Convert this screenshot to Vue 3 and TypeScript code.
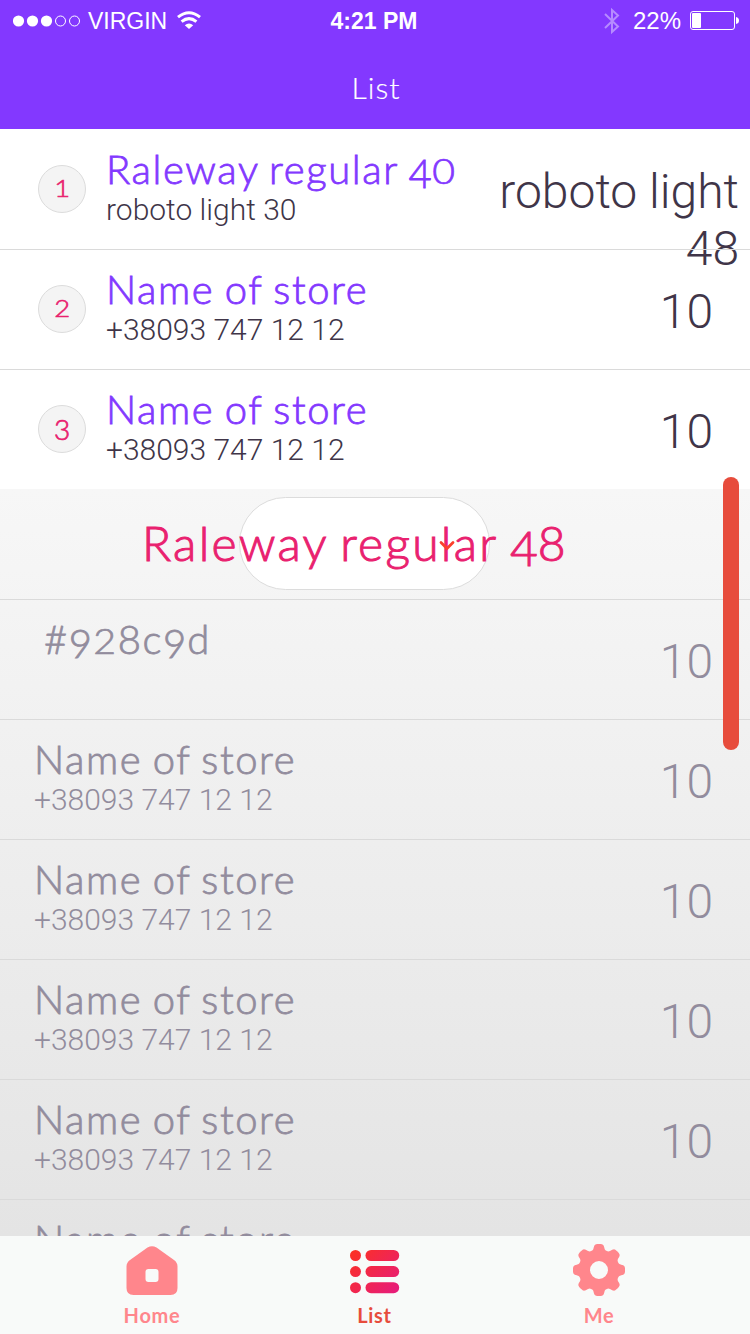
<script setup lang="ts">
interface Store {
  name: string
  detail: string
  value: string
  kind?: string
}

const ranked: Store[] = [
  { name: 'Raleway regular 40', detail: 'roboto light 30', value: 'roboto light 48', kind: 'wide' },
  { name: 'Name of store', detail: '+38093 747 12 12', value: '10' },
  { name: 'Name of store', detail: '+38093 747 12 12', value: '10' },
]

const others: Store[] = [
  { name: '#928c9d', detail: '', value: '10', kind: 'code' },
  ...Array.from({ length: 4 }, () => ({ name: 'Name of store', detail: '+38093 747 12 12', value: '10' })),
  { name: 'Name of store', detail: '', value: '' },
]

// Splits text so that digits can be set as old-style figures.
function figures(text: string) {
  return (text.match(/[012]|[34579]|[^0-9]+|[68]/g) ?? []).map((part) => ({
    part,
    cls: /^[012]$/.test(part) ? 'low' : /^[34579]$/.test(part) ? 'drop' : '',
  }))
}

// Eight-toothed outline around a 52x52 box.
const gear =
  Array.from({ length: 240 }, (_, i) => {
    const a = (i / 240) * Math.PI * 2
    const r = 23.2 + 2.9 * Math.tanh(2 * Math.cos(8 * a) + 0.5)
    return `${i ? 'L' : 'M'}${(26 + r * Math.cos(a)).toFixed(2)} ${(26 + r * Math.sin(a)).toFixed(2)}`
  }).join('') + 'ZM35 26A9 9 0 1 0 17 26A9 9 0 1 0 35 26Z'
</script>

<template>
  <div class="screen">
    <header>
      <div class="status">
        <div class="carrier">
          <svg width="68" height="12" viewBox="0 0 68 12">
            <circle v-for="i in 3" :key="i" :cx="14 * i - 8.5" cy="6" r="5.6" fill="#fff" />
            <circle v-for="i in 2" :key="i + 3" :cx="14 * i + 33.5" cy="6" r="5" fill="none" stroke="#fff" />
          </svg>
          <span class="virgin">VIRGIN</span>
          <svg class="wifi" width="24" height="19" viewBox="0 0 24 19" fill="none" stroke="#fff" stroke-width="3">
            <path d="M1 6.2Q12 -2.8 23 6.2" />
            <path d="M4.6 10.6Q12 4.6 19.4 10.6" />
            <path d="M12 18L7.8 14.2Q12 11 16.2 14.2Z" fill="#fff" stroke="none" />
          </svg>
        </div>
        <strong>4:21 PM</strong>
        <div class="power">
          <svg width="16" height="28" viewBox="0 0 16 28" fill="none" stroke="#b68bff" stroke-width="2">
            <path d="M1 7L14 19.5L8 25V3L14 8.5L1 21" />
          </svg>
          <span class="percent">22%</span>
          <svg width="49" height="20" viewBox="0 0 49 20">
            <rect x=".5" y=".5" width="44" height="18" rx="2.5" fill="none" stroke="#fff" />
            <rect x="2" y="2" width="9" height="15" rx="1" fill="#fff" />
            <path d="M46 6Q49 6.5 49 9.5Q49 12.500 46 13Z" fill="#fff" />
          </svg>
        </div>
      </div>
      <h1>List</h1>
    </header>

    <main>
      <section class="ranked">
        <article v-for="(s, i) in ranked" :key="i" class="row">
          <div class="badge"><span v-for="f in figures(String(i + 1))" :key="f.part" :class="f.cls">{{ f.part }}</span></div>
          <div class="info">
            <h2 :class="s.kind"><span v-for="(f, j) in figures(s.name)" :key="j" :class="f.cls">{{ f.part }}</span></h2>
            <p :class="s.kind">{{ s.detail }}</p>
          </div>
          <div class="value" :class="s.kind">{{ s.value }}</div>
        </article>
      </section>

      <section class="others">
        <div class="more">
          <div class="pill"></div>
          <span class="caption"><span v-for="(f, j) in figures('Raleway regular 48')" :key="j" :class="f.cls">{{ f.part }}</span></span>
          <svg class="arrow" width="18" height="12" viewBox="0 0 18 12">
            <path d="M3 2.500L9 8.500L15 2.500" fill="none" stroke="#fb402b" stroke-width="2.8" stroke-linecap="round" />
          </svg>
        </div>
        <article v-for="(s, i) in others" :key="i" class="row">
          <div class="info">
            <h2 :class="s.kind"><span v-for="(f, j) in figures(s.name)" :key="j" :class="f.cls">{{ f.part }}</span></h2>
            <p v-if="s.detail">{{ s.detail }}</p>
          </div>
          <div v-if="s.value" class="value">{{ s.value }}</div>
        </article>
      </section>
      <div class="scrollbar"></div>
    </main>

    <nav>
      <a class="tab home">
        <svg width="52" height="50" viewBox="0 0 52 50">
          <path fill="#ff868c" fill-rule="evenodd" d="M21.500 1.600Q26 -1 30.500 1.600L48 14Q51.500 16.500 51.500 20.500V42Q51.500 49 44.500 49H7.500Q.5 49 .5 42V20.500Q.5 16.500 4 14ZM22.500 23Q19.500 23 19.500 26V33Q19.500 36 22.500 36H29.500Q32.500 36 32.500 33V26Q32.500 23 29.500 23Z" />
        </svg>
        <span>Home</span>
      </a>
      <a class="tab list">
        <svg width="50" height="44" viewBox="0 0 50 44">
          <defs>
            <linearGradient id="hot" gradientUnits="userSpaceOnUse" x1="3" y1="3" x2="44" y2="42">
              <stop offset="0" stop-color="#fb3026" />
              <stop offset="1" stop-color="#e71d78" />
            </linearGradient>
          </defs>
          <g fill="url(#hot)">
            <template v-for="i in 3" :key="i">
              <circle cx="5.500" :cy="16.1 * i - 10.6" r="5.500" />
              <rect x="15.500" :y="16.1 * i - 16.1" width="33.700" height="11" rx="5.500" />
            </template>
          </g>
        </svg>
        <span>List</span>
      </a>
      <a class="tab me">
        <svg width="52" height="52" viewBox="0 0 52 52">
          <path :d="gear" fill="#ff868c" fill-rule="evenodd" />
        </svg>
        <span>Me</span>
      </a>
    </nav>
  </div>
</template>

<style>
body {
  margin: 0;
}
</style>

<style scoped>
.screen {
  display: flex;
  flex-direction: column;
  width: 750px;
  height: 1334px;
  overflow: hidden;
  background: #fff;
  font-family: Lato, "Open Sans", sans-serif;
}
svg {
  display: block;
  flex: none;
}
h1, h2, p {
  margin: 0;
  font-weight: 400;
  white-space: nowrap;
}
header {
  flex: none;
  height: 129px;
  background: #8338ff;
  color: #fff;
}
.status {
  display: grid;
  grid-template-columns: 1fr auto 1fr;
  align-items: center;
  height: 42px;
  padding: 0 11px 0 13px;
  font-family: "Liberation Sans", Arial, sans-serif;
  font-size: 24px;
}
.status strong {
  margin: 0 3px 0 -1px;
  font-size: 23px;
}
.carrier, .power {
  display: flex;
  align-items: center;
}
.virgin {
  margin-left: 7px;
  font-size: 23px;
}
.wifi {
  margin: -2px 0 0 10px;
}
.power {
  justify-content: flex-end;
}
.percent {
  margin: 0 9px 0 13px;
}
h1 {
  margin-top: 27px;
  padding-left: 2px;
  text-align: center;
  font-size: 30px;
  line-height: 36px;
  font-weight: 300;
  letter-spacing: 1px;
  -webkit-text-stroke: 0.2px currentColor;
}
main {
  position: relative;
  flex: none;
  height: 1107px;
  overflow: hidden;
}
.row {
  position: relative;
  display: flex;
  box-sizing: border-box;
  height: 120px;
  padding-left: 34px;
  border-top: 1px solid #dadada;
  color: #928c9d;
}
.ranked .row {
  padding-left: 38px;
  color: #403548;
}
.ranked .row:first-child {
  border-color: transparent;
}
.badge {
  box-sizing: border-box;
  width: 48px;
  height: 48px;
  margin: 35px 20px 0 0;
  border: 1px solid #dcdcdc;
  border-radius: 50%;
  background: #f4f4f4;
  color: #e9216f;
  text-align: center;
  font-size: 28px;
  font-weight: 300;
  line-height: 40px;
  -webkit-text-stroke: 0.7px currentColor;
}
.info {
  flex: 1;
  padding-top: 19px;
}
h2 {
  height: 43px;
  font-size: 40px;
  font-weight: 300;
  line-height: 41px;
  letter-spacing: 1.6px;
  word-spacing: -2px;
  -webkit-text-stroke: 0.8px currentColor;
}
.ranked h2 {
  color: #8338ff;
}
h2.code {
  padding-left: 10px;
}
.low, .drop {
  display: inline-block;
  letter-spacing: 0;
}
.low {
  transform: scale(0.98, 0.86);
  transform-origin: 50% 86%;
}
.drop {
  transform: translateY(0.1em);
}
.code .low, .code .drop {
  letter-spacing: 1.2px;
}
p {
  font-family: Roboto, sans-serif;
  font-size: 30px;
  font-weight: 300;
  line-height: 36px;
}
.value {
  padding: 33px 37px 0 0;
  font-family: Roboto, sans-serif;
  font-size: 48px;
  font-weight: 300;
  line-height: 57px;
}
.value.wide {
  width: 250px;
  padding-right: 11px;
  text-align: right;
}
.others {
  height: 747px;
  background: linear-gradient(#f7f7f7, #e4e4e4);
}
.others .row:last-child {
  height: 37px;
}
.more {
  position: relative;
  display: flex;
  align-items: center;
  height: 110px;
}
.pill {
  box-sizing: border-box;
  width: 251px;
  height: 93px;
  margin: -1px 0 0 239px;
  border: 1px solid #dcdcdc;
  border-radius: 47px;
  background: #fff;
}
.caption {
  position: absolute;
  left: 142px;
  top: 25px;
  color: #e9216f;
  font-size: 48px;
  font-weight: 300;
  line-height: 58px;
  letter-spacing: 2.3px;
  word-spacing: -3px;
  white-space: pre;
  -webkit-text-stroke: 1px currentColor;
}
.arrow {
  position: absolute;
  left: 438px;
  top: 51px;
}
.scrollbar {
  position: absolute;
  left: 723px;
  top: 348px;
  width: 16px;
  height: 273px;
  border-radius: 8px;
  background: #e74c3c;
}
nav {
  display: grid;
  grid-template-columns: 160px 285px 164px;
  justify-content: center;
  flex: none;
  box-sizing: border-box;
  height: 98px;
  padding-left: 3px;
  background: #f8faf9;
}
.tab {
  display: grid;
  grid-template-rows: 68px 22px;
  place-items: center;
  align-content: start;
  color: #ff868c;
  font-size: 20px;
  font-weight: 700;
  line-height: 22px;
  letter-spacing: 0.7px;
}
.list {
  color: #e74c3c;
}
.list svg {
  margin-top: 4px;
}
.home svg {
  margin-top: 2px;
}
</style>
